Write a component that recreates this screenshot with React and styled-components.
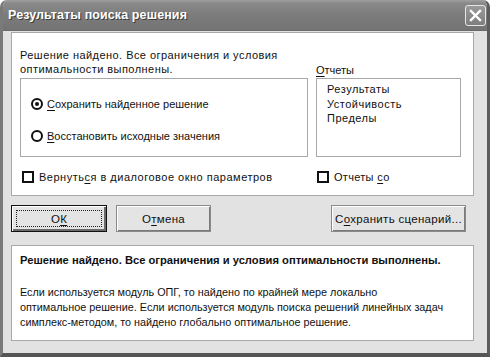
import React from "react";
import styled, { createGlobalStyle } from "styled-components";

const Global = createGlobalStyle`
  html, body { margin: 0; padding: 0; background: #ffffff; }
  body { font-family: "Liberation Sans", "DejaVu Sans", sans-serif; }
`;

const Window = styled.div`
  width: 490px;
  height: 357px;
  box-sizing: border-box;
  display: flex;
  flex-direction: column;
  background: #e2e2e2;
  border-radius: 7px 7px 0 0;
  border-left: 3px solid #7a7a7a;
  border-right: 3px solid #5c5c5c;
  border-bottom: 4px solid #555555;
  overflow: hidden;
`;

const TitleBar = styled.div`
  height: 30px;
  flex: 0 0 30px;
  display: flex;
  align-items: center;
  justify-content: space-between;
  padding: 0 3px 0 5px;
  margin: 0 -3px;
  background: linear-gradient(#a0a0a0 0px, #8a8a8a 3px, #7c7c7c 15px, #747474 29px);
  border-bottom: 1px solid #6a6a6a;
`;

const Title = styled.div`
  color: #ffffff;
  font-family: "Liberation Sans", sans-serif;
  font-weight: bold;
  font-size: 12.5px;
  letter-spacing: 0.1px;
  text-shadow: 1px 1px 0 #3c3c3c;
  padding-left: 3px;
`;

const CloseBtn = styled.div`
  width: 19px;
  height: 19px;
  border: 1px solid #e6e6e6;
  border-radius: 3px;
  background: linear-gradient(#9a9a9a, #7e7e7e);
  display: flex;
  align-items: center;
  justify-content: center;
  margin-right: 1px;
  margin-top: 1px;
`;

const Body = styled.div`
  flex: 1;
  display: flex;
  flex-direction: column;
  padding: 1px 13px 0 8px;
`;

const Panel = styled.div`
  background: #ffffff;
  border: 1px solid #a8a8a8;
  box-sizing: border-box;
`;

const TopPanel = styled(Panel)`
  height: 164px;
  padding: 8px 13px 0 8px;
  display: grid;
  grid-template-columns: 288px 145px;
  grid-template-rows: 37px 79px 38px;
  column-gap: 8px;
  font-size: 11px;
  color: #111;
`;

const Intro = styled.div`
  line-height: 14px;
  letter-spacing: 0.45px;
  align-self: end;
  padding-bottom: 2px;
  font-size: 11px;
`;

const ListLabel = styled.div`
  align-self: end;
  line-height: 14px;
  padding-bottom: 1px;
  font-size: 11px;
`;

const RadioBox = styled.div`
  border: 1px solid #a8a8a8;
  box-sizing: border-box;
  display: flex;
  flex-direction: column;
  gap: 18px;
  padding: 18px 0 0 10px;
`;

const RadioRow = styled.div`
  display: flex;
  align-items: center;
  gap: 4px;
  height: 14px;
  font-size: 11px;
`;

const Radio = styled.span`
  width: 12px;
  height: 12px;
  box-sizing: border-box;
  border-radius: 50%;
  border: 2px solid #111;
  display: flex;
  align-items: center;
  justify-content: center;
  &::after {
    content: "";
    display: ${(p) => (p.$checked ? "block" : "none")};
    width: 4px;
    height: 4px;
    border-radius: 50%;
    background: #111;
  }
`;

const ListBox = styled.div`
  border: 1px solid #a8a8a8;
  box-sizing: border-box;
  padding: 3px 0 0 10px;
  display: flex;
  flex-direction: column;
  font-size: 11px;
  letter-spacing: 0.5px;
  line-height: 14.5px;
`;

const CheckRow = styled.div`
  display: flex;
  align-items: center;
  gap: 5px;
  padding-left: ${(p) => p.$indent || 0}px;
  padding-top: 14px;
  align-self: start;
  font-size: 11px;
  letter-spacing: ${(p) => p.$ls || 0}px;
`;

const Check = styled.span`
  width: 12px;
  height: 12px;
  box-sizing: border-box;
  border: 2px solid #111;
  background: #fff;
  flex: 0 0 12px;
`;

const U = styled.span`
  text-decoration: underline;
  text-underline-offset: 2px;
`;

const ButtonRow = styled.div`
  display: flex;
  align-items: center;
  margin-top: 9px;
  height: 27px;
  gap: 9px;
`;

const Button = styled.button`
  width: ${(p) => p.$w}px;
  height: 27px;
  box-sizing: border-box;
  background: #e4e4e4;
  border: 1px solid ${(p) => (p.$default ? "#111" : "#8a8a8a")};
  box-shadow: ${(p) =>
    p.$default
      ? "inset 1px 1px 0 #ffffff, inset -2px -2px 0 #6a6a6a"
      : "inset 1px 1px 0 #ffffff, inset -1px -1px 0 #7a7a7a"};
  font-family: "Liberation Sans", sans-serif;
  font-size: 11.5px;
  letter-spacing: 0.3px;
  color: #111;
  padding: 0;
  position: relative;
  margin-left: ${(p) => (p.$push ? "auto" : "0")};
  margin-right: ${(p) => (p.$push ? "8px" : "0")};
  &::before {
    content: "";
    display: ${(p) => (p.$default ? "block" : "none")};
    position: absolute;
    inset: 4px;
    border: 1px dotted #222;
  }
`;

const BottomPanel = styled(Panel)`
  margin-top: 13px;
  height: 96px;
  padding: 7px 8px 0 8px;
  color: #111;
`;

const Bold = styled.div`
  font-weight: bold;
  font-size: 11.2px;
  line-height: 14px;
  margin-bottom: 18px;
`;

const Para = styled.div`
  line-height: 15px;
  font-size: 10.8px;
  white-space: nowrap;
`;

export default function App() {
  return (
    <>
      <Global />
      <Window>
        <TitleBar>
          <Title>Результаты поиска решения</Title>
          <CloseBtn>
            <svg width="13" height="13" viewBox="0 0 13 13">
              <path d="M2 2 L11 11 M11 2 L2 11" stroke="#ffffff" strokeWidth="2.4" strokeLinecap="square" />
            </svg>
          </CloseBtn>
        </TitleBar>
        <Body>
          <TopPanel>
            <Intro>
              Решение найдено. Все ограничения и условия
              <br />
              оптимальности выполнены.
            </Intro>
            <ListLabel>
              <U>О</U>тчеты
            </ListLabel>
            <RadioBox>
              <RadioRow>
                <Radio $checked />
                <span>
                  <U>С</U>охранить найденное решение
                </span>
              </RadioRow>
              <RadioRow>
                <Radio />
                <span>
                  <U>В</U>осстановить исходные значения
                </span>
              </RadioRow>
            </RadioBox>
            <ListBox>
              <span>Результаты</span>
              <span>Устойчивость</span>
              <span>Пределы</span>
            </ListBox>
            <CheckRow $indent={2} $ls={0.5}>
              <Check />
              <span>
                Вернуть<U>с</U>я в диалоговое окно параметров
              </span>
            </CheckRow>
            <CheckRow $indent={1} $ls={0.3}>
              <Check />
              <span>
                Отчеты <U>с</U>о
              </span>
            </CheckRow>
          </TopPanel>
          <ButtonRow>
            <Button $w={96} $default>
              О<U>К</U>
            </Button>
            <Button $w={95}>
              О<U>т</U>мена
            </Button>
            <Button $w={135} $push>
              С<U>о</U>хранить сценарий...
            </Button>
          </ButtonRow>
          <BottomPanel>
            <Bold>Решение найдено. Все ограничения и условия оптимальности выполнены.</Bold>
            <Para>
              Если используется модуль ОПГ, то найдено по крайней мере локально
              <br />
              оптимальное решение. Если используется модуль поиска решений линейных задач
              <br />
              симплекс-методом, то найдено глобально оптимальное решение.
            </Para>
          </BottomPanel>
        </Body>
      </Window>
    </>
  );
}
